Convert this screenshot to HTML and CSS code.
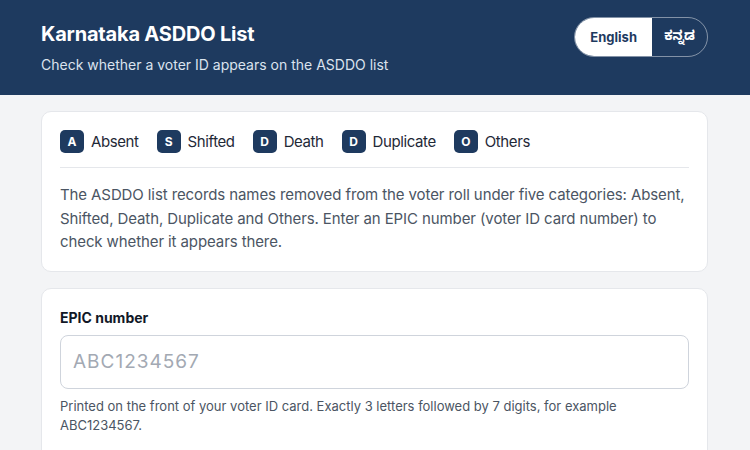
FILE: index.html
```html
<!DOCTYPE html>
<html lang="en">
<head>
<meta charset="utf-8">
<title>Karnataka ASDDO List</title>
<link rel="stylesheet" href="styles.css">
</head>
<body>
<header class="topbar">
  <div class="brand">
    <h1 class="title">Karnataka ASDDO List</h1>
    <p class="subtitle">Check whether a voter ID appears on the ASDDO list</p>
  </div>
  <div class="lang">
    <button class="lang-btn active">English</button>
    <button class="lang-btn">ಕನ್ನಡ</button>
  </div>
</header>
<main class="main">
  <section class="card">
    <ul class="legend">
      <li class="legend-item"><span class="badge">A</span>Absent</li>
      <li class="legend-item"><span class="badge">S</span>Shifted</li>
      <li class="legend-item"><span class="badge">D</span>Death</li>
      <li class="legend-item"><span class="badge">D</span>Duplicate</li>
      <li class="legend-item"><span class="badge">O</span>Others</li>
    </ul>
    <p class="intro">The ASDDO list records names removed from the voter roll under five categories: Absent, Shifted, Death, Duplicate and Others. Enter an EPIC number (voter ID card number) to check whether it appears there.</p>
  </section>
  <section class="card form-card">
    <label class="label" for="epic">EPIC number</label>
    <input class="input" id="epic" type="text" placeholder="ABC1234567">
    <p class="hint">Printed on the front of your voter ID card. Exactly 3 letters followed by 7 digits, for example ABC1234567.</p>
  </section>
</main>
</body>
</html>
```

FILE: styles.css
```css
* { box-sizing: border-box; }
html, body { margin: 0; padding: 0; }
body {
  font-family: Inter, "Noto Sans", "Noto Sans Kannada", sans-serif;
  background: #f3f4f6;
  color: #111827;
}
.topbar {
  background: #1e3a5f;
  color: #fff;
  display: flex;
  justify-content: space-between;
  align-items: flex-start;
  padding: 17px 42px 20px 41px;
}
.title {
  margin: 0;
  font-size: 20px;
  line-height: 34px;
  font-weight: 700;
  letter-spacing: -0.2px;
}
.subtitle {
  margin: 4px 0 0;
  font-size: 14px;
  line-height: 20px;
  color: #dbe3ee;
}
.lang {
  display: flex;
  height: 40px;
  border: 1px solid rgba(255,255,255,0.45);
  border-radius: 20px;
  overflow: hidden;
}
.lang-btn {
  font-family: Inter, "Noto Sans", "Noto Sans Kannada", sans-serif;
  font-size: 13px;
  font-weight: 700;
  border: 0;
  background: transparent;
  color: #fff;
  padding: 0 12px;
  cursor: pointer;
}
.lang-btn.active {
  background: #fff;
  color: #1e3a5f;
  width: 77px;
}
.main {
  padding: 16px 42px 0 41px;
  display: flex;
  flex-direction: column;
  gap: 16px;
}
.card {
  background: #fff;
  border: 1px solid #e5e7eb;
  border-radius: 10px;
  padding: 18px 18px 17px;
}
.legend {
  list-style: none;
  margin: 0;
  padding: 0 0 14px;
  display: flex;
  gap: 18px;
  border-bottom: 1px solid #e5e7eb;
}
.legend-item {
  display: flex;
  align-items: center;
  gap: 7px;
  font-size: 15px;
  line-height: 23px;
  letter-spacing: -0.4px;
  color: #1f2937;
}
.badge {
  width: 24px;
  height: 23px;
  border-radius: 5px;
  background: #1e3a5f;
  color: #fff;
  font-size: 12px;
  font-weight: 700;
  letter-spacing: 0;
  display: flex;
  align-items: center;
  justify-content: center;
}
.intro {
  margin: 15px 0 0;
  font-size: 15px;
  line-height: 23.5px;
  letter-spacing: -0.1px;
  color: #4b5563;
}
.form-card {
  padding-bottom: 30px;
}
.label {
  display: block;
  font-size: 14px;
  line-height: 22px;
  font-weight: 700;
  color: #111827;
}
.input {
  display: block;
  width: 100%;
  margin-top: 6px;
  height: 54px;
  border: 1px solid #cfd4dc;
  border-radius: 8px;
  padding: 0 12px;
  font-family: Inter, "Noto Sans", sans-serif;
  font-size: 19px;
  letter-spacing: 1px;
  color: #111827;
  background: #fff;
}
.input::placeholder { color: #a3a9b3; }
.hint {
  margin: 8px 0 0;
  font-size: 13px;
  line-height: 19px;
  color: #4b5563;
}
```
